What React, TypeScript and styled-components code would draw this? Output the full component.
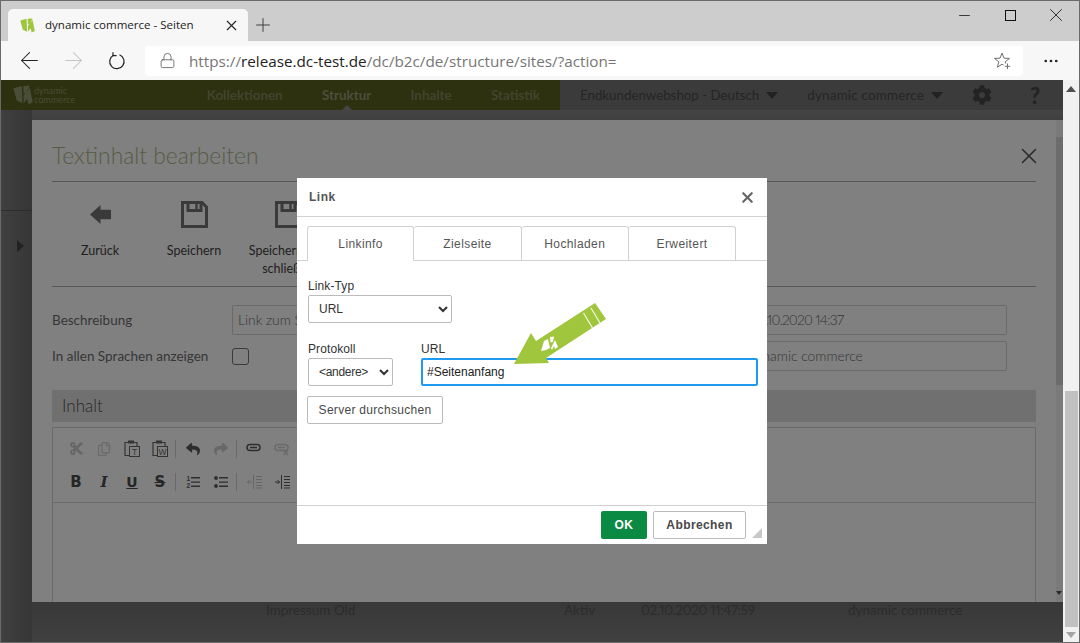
import styled, { createGlobalStyle } from 'styled-components'
import { ArrowLeft, ArrowRight, Ellipsis, Lock, Minus, Plus, X } from 'lucide-react'
import { FaCog, FaCut, FaRegCopy, FaReply, FaShare } from 'react-icons/fa'

const GlobalStyle = createGlobalStyle`
  html, body {
    margin: 0;
    padding: 0;
    background: #fff;
  }
  * {
    box-sizing: border-box;
  }
`

const Logo = ({ color, size }: { color: string; size: number }) => (
  <svg width={size} height={size} viewBox="0 0 16 16">
    <path d="M0.3 2.6 L7 0.8 L7.6 14.6 L3 12.4 Z" fill={color} />
    <path d="M8.2 0.9 L13.4 0.4 L10.6 6.4 L8.4 6.8 Z" fill={color} />
    <path d="M8.4 8.4 L13.4 2 L15.8 13.8 L12.4 15.4 L11.2 11 L8.6 14.6 Z" fill={color} />
  </svg>
)

const PasteIcon = ({ letter, color }: { letter: string; color: string }) => (
  <svg width="16" height="17" viewBox="0 0 16 17">
    <path d="M4 2.5 H1 V15.5 H5" fill="none" stroke={color} strokeWidth="1.2" />
    <path d="M10 2.5 H13 V6" fill="none" stroke={color} strokeWidth="1.2" />
    <rect x="4" y="0.5" width="6" height="3" fill={color} />
    <rect x="5.5" y="6.5" width="10" height="10" fill="none" stroke={color} strokeWidth="1" />
    <text x="10.5" y="14.6" fontSize="8.5" fontFamily="Liberation Sans, sans-serif" textAnchor="middle" fill={color}>
      {letter}
    </text>
  </svg>
)

const LinkIcon = ({ color, broken }: { color: string; broken?: boolean }) => (
  <svg width="16" height="14" viewBox="0 0 16 14">
    <rect x="1" y="2.5" width="13" height="6" rx="3" fill="none" stroke={color} strokeWidth="1.5" />
    <path d="M4 5.5 H11" stroke={color} strokeWidth="1.5" />
    {broken && <path d="M9.5 8.5 L14 13 M14 8.5 L9.5 13" stroke={color} strokeWidth="1.5" />}
  </svg>
)

const ListIcon = ({ ordered }: { ordered?: boolean }) => (
  <svg width="14" height="14" viewBox="0 0 14 14" fill="#2e2e2e">
    <path d="M5 2 H14 V3.4 H5 Z M5 6.4 H14 V7.8 H5 Z M5 10.6 H14 V12 H5 Z" />
    {ordered ? (
      <>
        <text x="0.5" y="6" fontSize="6.5" fontFamily="Liberation Sans, sans-serif" fontWeight="700">
          1
        </text>
        <text x="0.5" y="13" fontSize="6.5" fontFamily="Liberation Sans, sans-serif" fontWeight="700">
          2
        </text>
      </>
    ) : (
      <>
        <circle cx="2" cy="3" r="1.9" />
        <circle cx="2" cy="11" r="1.9" />
      </>
    )}
  </svg>
)

const IndentIcon = ({ color, out }: { color: string; out?: boolean }) => (
  <svg width="15" height="14" viewBox="0 0 15 14" fill="none" stroke={color} strokeWidth="1">
    <path d="M6.5 0 V14" />
    <path d="M9 1.5 H15 M9 4.5 H15 M9 7.5 H15 M9 10.5 H15 M9 13 H15" />
    {out ? <path d="M5 7 H0.5 M2.5 5 L0.5 7 L2.5 9" /> : <path d="M0 7 H4.5 M2.5 5 L4.5 7 L2.5 9" />}
  </svg>
)

const SaveIcon = () => (
  <svg width="27" height="27" viewBox="0 0 27 27" fill="none" stroke="#3a3a3a" strokeWidth="3">
    <path d="M1.5 1.5 H21 L25.5 6 V25.5 H1.5 Z" />
    <path d="M7 1.5 V9.5 H20 V1.5" />
    <path d="M15.5 3 V8" strokeWidth="2.4" />
  </svg>
)

const EditorTools = () => {
  const rows = [
    [
      [
        <FaCut key="cut" size={15} color="#666" />,
        <FaRegCopy key="copy" size={14} color="#6c6c6c" />,
        <PasteIcon key="text" letter="T" color="#343434" />,
        <PasteIcon key="word" letter="W" color="#343434" />,
      ],
      [<FaReply key="undo" size={14} color="#2e2e2e" />, <FaShare key="redo" size={14} color="#686868" />],
      [<LinkIcon key="link" color="#2e2e2e" />, <LinkIcon key="unlink" color="#6a6a6a" broken />],
    ],
    [
      [
        <BoldGlyph key="b">B</BoldGlyph>,
        <ItalicGlyph key="i">I</ItalicGlyph>,
        <UnderGlyph key="u">U</UnderGlyph>,
        <StrikeGlyph key="s">S</StrikeGlyph>,
      ],
      [<ListIcon key="ol" ordered />, <ListIcon key="ul" />],
      [<IndentIcon key="out" color="#666" out />, <IndentIcon key="in" color="#2e2e2e" />],
    ],
  ]
  return (
    <EditorToolbar>
      {rows.map((row, r) => (
        <ToolRow key={r}>
          {row.map((group, g) => (
            <ToolGroup key={g} $first={g === 0}>
              {group.map((icon, i) => (
                <ToolCell key={i}>{icon}</ToolCell>
              ))}
            </ToolGroup>
          ))}
        </ToolRow>
      ))}
    </EditorToolbar>
  )
}

const App = () => {
  return (
    <>
      <GlobalStyle />
      <Win>
        <TitleBar>
          <Tab>
            <Logo color="#9cc73c" size={15} />
            <TabTitle>dynamic commerce - Seiten</TabTitle>
            <X size={17} strokeWidth={1.6} color="#222" />
          </Tab>
          <NewTab>
            <Plus size={22} strokeWidth={1} color="#333" />
          </NewTab>
          <WinButtons>
            <WinButton>
              <Minus size={17} strokeWidth={1.1} color="#111" />
            </WinButton>
            <WinButton>
              <MaxBox />
            </WinButton>
            <WinButton>
              <X size={22} strokeWidth={0.9} color="#111" />
            </WinButton>
          </WinButtons>
        </TitleBar>

        <BrowserBar>
          <NavIcon>
            <ArrowLeft size={27} strokeWidth={0.9} color="#222" />
          </NavIcon>
          <NavIcon>
            <ArrowRight size={27} strokeWidth={0.9} color="#c4c4c4" />
          </NavIcon>
          <NavIcon>
            <svg width="18" height="18" viewBox="0 0 18 18" fill="none" stroke="#222" strokeWidth="1.2">
              <path d="M11.5 2.8 A7.2 7.2 0 1 1 5.4 3.2" />
              <path d="M5 0.3 V3.6 H8.6" />
            </svg>
          </NavIcon>
          <Address>
            <Lock size={17} strokeWidth={1.1} color="#555" />
            <Url>
              <UrlMuted>https://</UrlMuted>
              release.dc-test.de
              <UrlMuted>/dc/b2c/de/structure/sites/?action=</UrlMuted>
            </Url>
            <svg width="18" height="18" viewBox="0 0 18 18" fill="none" stroke="#707070" strokeWidth="1">
              <path d="M11.8 11.6 L11.2 9.8 L15.5 6.4 L10 6.2 L8 1 L6 6.2 L0.5 6.4 L4.8 9.8 L3.4 15.2 L8 12.2 L9.5 13" />
              <path d="M13.5 11.5 V17 M10.8 14.3 H16.2" />
            </svg>
          </Address>
          <MoreButton>
            <Ellipsis size={18} strokeWidth={1.6} color="#222" />
          </MoreButton>
        </BrowserBar>

        <Page>
          <PageMain>
            <TopNav>
              <Brand>
                <Logo color="#4a4d38" size={20} />
                <BrandText>
                  dynamic
                  <br />
                  commerce
                </BrandText>
                <Menu>
                  <MenuItem>Kollektionen</MenuItem>
                  <MenuItem $active>Struktur</MenuItem>
                  <MenuItem>Inhalte</MenuItem>
                  <MenuItem>Statistik</MenuItem>
                </Menu>
              </Brand>
              <UserMenu>
                <UserItem>
                  Endkundenwebshop - Deutsch
                  <Caret />
                </UserItem>
                <UserItem $wide>
                  dynamic commerce
                  <Caret />
                </UserItem>
                <FaCog size={20} color="#232323" />
                <Help>?</Help>
              </UserMenu>
            </TopNav>
            <PageBody>
              <Sidebar>
                <SidebarHead />
                <SidebarArrow />
              </Sidebar>
              <TableArea>
                <TableRow>
                  <span>Impressum Old</span>
                  <span>Aktiv</span>
                  <TableDate>02.10.2020 11:47:59</TableDate>
                  <span>dynamic commerce</span>
                </TableRow>
              </TableArea>
            </PageBody>

            <Modal>
              <ModalContent>
                <ModalHeader>
                  <ModalTitle>Textinhalt bearbeiten</ModalTitle>
                  <ModalClose>
                    <X size={26} strokeWidth={1.4} color="#2a2a2a" />
                  </ModalClose>
                </ModalHeader>
                <ActionBar>
                  <Action>
                    <ActionIcon>
                      <svg width="21" height="19" viewBox="0 0 20 18">
                        <path d="M0 9 L10 0 V4.5 H20 V13.5 H10 V18 Z" fill="#3a3a3a" />
                      </svg>
                    </ActionIcon>
                    Zurück
                  </Action>
                  <Action>
                    <ActionIcon>
                      <SaveIcon />
                    </ActionIcon>
                    Speichern
                  </Action>
                  <Action>
                    <ActionIcon>
                      <SaveIcon />
                    </ActionIcon>
                    Speichern und schließen
                  </Action>
                </ActionBar>
                <FormGrid>
                  <FieldLabel>Beschreibung</FieldLabel>
                  <FieldBox>Link zum Seitenanfang</FieldBox>
                  <span />
                  <FieldBox $date>02.10.2020 14:37</FieldBox>
                  <FieldLabel>In allen Sprachen anzeigen</FieldLabel>
                  <CheckBox />
                  <span />
                  <FieldBox>dynamic commerce</FieldBox>
                </FormGrid>
                <SectionBar>Inhalt</SectionBar>
                <Editor>
                  <EditorTools />
                </Editor>
              </ModalContent>
              <ModalScroll>
                <ModalThumb />
                <ModalScrollArrow />
              </ModalScroll>
            </Modal>

            <Dialog>
              <DialogTitle>
                Link
                <X size={17} strokeWidth={3} color="#666" />
              </DialogTitle>
              <Tabs>
                <DialogTab $active>Linkinfo</DialogTab>
                <DialogTab>Zielseite</DialogTab>
                <DialogTab>Hochladen</DialogTab>
                <DialogTab>Erweitert</DialogTab>
              </Tabs>
              <DialogBody>
                <DialogLabel>Link-Typ</DialogLabel>
                <TypeSelect defaultValue="URL">
                  <option>URL</option>
                </TypeSelect>
                <UrlRow>
                  <div>
                    <DialogLabel>Protokoll</DialogLabel>
                    <ProtocolSelect defaultValue="andere">
                      <option value="andere">&lt;andere&gt;</option>
                    </ProtocolSelect>
                  </div>
                  <UrlField>
                    <DialogLabel>URL</DialogLabel>
                    <UrlInput defaultValue="#Seitenanfang" />
                  </UrlField>
                </UrlRow>
                <ServerButton>Server durchsuchen</ServerButton>
              </DialogBody>
              <DialogFooter>
                <OkButton>OK</OkButton>
                <CancelButton>Abbrechen</CancelButton>
                <Grip />
              </DialogFooter>
            </Dialog>

            <Pointer viewBox="0 0 120 85" width="120" height="85">
              <path d="M14 69 L31 38 L36 46 L95 8 L106 24 L46 63 L49 68 Z" fill="#a0c63e" />
              <path d="M83.5 18 L92.5 33 M91 13 L100 28" stroke="#eef4da" strokeWidth="1.3" />
              <path d="M41 56 L44 46 L48 44 L50 53 L46 55 Z M50 42 L54 41.5 L53 47 L50.5 47.5 Z M51 53 L55 45 L58 52 L55 54 L54 51 L52 55 Z" fill="#fff" />
            </Pointer>
          </PageMain>

          <PageScroll>
            <ScrollArrow $up />
            <ScrollSpacer />
            <ScrollThumb />
            <ScrollArrow />
          </PageScroll>
        </Page>
      </Win>
    </>
  )
}

export default App

const Win = styled.div`
  width: 1080px;
  height: 643px;
  border: 1px solid #6a6a6a;
  display: flex;
  flex-direction: column;
  overflow: hidden;
  font-family: 'Liberation Sans', Arial, sans-serif;
`

const TitleBar = styled.div`
  height: 40px;
  background: #cdcdcd;
  display: flex;
  align-items: flex-end;
  padding-left: 7px;
  flex-shrink: 0;
`
const Tab = styled.div`
  width: 240px;
  height: 32px;
  background: #f7f7f7;
  border-radius: 5px 5px 0 0;
  display: flex;
  align-items: center;
  padding: 0 8px 0 12px;
`
const TabTitle = styled.span`
  flex: 1;
  margin-left: 10px;
  padding-bottom: 2px;
  font: 11.55px 'Open Sans', sans-serif;
  color: #222;
`
const NewTab = styled.div`
  width: 30px;
  height: 32px;
  display: flex;
  align-items: center;
  justify-content: center;
`
const WinButtons = styled.div`
  margin-left: auto;
  align-self: flex-start;
  display: flex;
  padding-top: 6px;
`
const WinButton = styled.div`
  width: 46px;
  height: 16px;
  display: flex;
  align-items: center;
  justify-content: center;
`
const MaxBox = styled.div`
  width: 11px;
  height: 11px;
  border: 1px solid #111;
`

const BrowserBar = styled.div`
  height: 39px;
  background: #f7f7f7;
  display: flex;
  align-items: center;
  padding-left: 6px;
  flex-shrink: 0;
`
const NavIcon = styled.div`
  width: 44px;
  height: 30px;
  display: flex;
  align-items: center;
  justify-content: center;
`
const Address = styled.div`
  width: 878px;
  height: 30px;
  margin-left: 6px;
  background: #fff;
  border-radius: 4px;
  display: flex;
  align-items: center;
  padding: 0 11px 0 14px;
`
const Url = styled.div`
  flex: 1;
  margin-left: 13px;
  font: 15.25px 'Open Sans', sans-serif;
  color: #222;
`
const UrlMuted = styled.span`
  color: #767676;
`
const MoreButton = styled.div`
  width: 56px;
  display: flex;
  justify-content: center;
`

const Page = styled.div`
  flex: 1;
  display: flex;
  min-height: 0;
`
const PageMain = styled.div`
  position: relative;
  flex: 1;
  display: flex;
  flex-direction: column;
  background: #3b3b3b;
  overflow: hidden;
  font-family: Lato, sans-serif;
  font-variant-numeric: proportional-nums;
`
const TopNav = styled.div`
  height: 30px;
  display: flex;
  flex-shrink: 0;
`
const Brand = styled.div`
  width: 559px;
  background: #2d3110;
  display: flex;
  align-items: center;
  padding: 0 20px 0 12px;
  flex-shrink: 0;
`
const BrandText = styled.div`
  margin-left: 1px;
  font-size: 9px;
  line-height: 9px;
  color: #4a4d35;
`
const Menu = styled.div`
  display: flex;
  gap: 39.3px;
  align-items: center;
  margin-left: auto;
  font-size: 13.4px;
  font-weight: 700;
`
const MenuItem = styled.span<{ $active?: boolean }>`
  position: relative;
  height: 30px;
  line-height: 30px;
  color: ${(p) => (p.$active ? '#4c4e3c' : '#42442f')};
  &::after {
    content: '';
    display: ${(p) => (p.$active ? 'block' : 'none')};
    position: absolute;
    left: 50%;
    bottom: 0;
    margin-left: -5px;
    border: 5px solid transparent;
    border-top: 0;
    border-bottom-color: #454545;
  }
`
const UserMenu = styled.div`
  flex: 1;
  display: flex;
  align-items: center;
  padding-left: 20px;
  font-size: 13.3px;
  color: #252525;
`
const UserItem = styled.div<{ $wide?: boolean }>`
  display: flex;
  align-items: center;
  margin-right: 29px;
  letter-spacing: ${(p) => (p.$wide ? '0.25px' : '0')};
`
const Caret = styled.span`
  margin-left: 7px;
  border: 6.5px solid transparent;
  border-bottom: 0;
  border-top: 7px solid #222;
`
const Help = styled.span`
  margin-left: 38px;
  font-size: 22px;
  font-weight: 900;
  color: #232323;
`

const PageBody = styled.div`
  flex: 1;
  display: flex;
  background: linear-gradient(180deg, #454545 0, #404040 10px, #383838 492px, #404040 100%);
  min-height: 0;
`
const Sidebar = styled.div`
  width: 31px;
  background: linear-gradient(90deg, #404040, #363636);
`
const SidebarHead = styled.div`
  height: 101px;
  border-bottom: 1px solid #2d2d2d;
`
const SidebarArrow = styled.div`
  margin: 29px 0 0 16px;
  width: 0;
  border: 6px solid transparent;
  border-right: 0;
  border-left: 7px solid #222;
`
const TableArea = styled.div`
  flex: 1;
  display: flex;
  flex-direction: column;
  justify-content: flex-end;
  padding-bottom: 24px;
`
const TableRow = styled.div`
  display: grid;
  grid-template-columns: 298px 77px 207px 1fr;
  padding-left: 234px;
  font-size: 13.5px;
  line-height: 16px;
  color: #2c2c2c;
`
const TableDate = styled.span`
  letter-spacing: -0.33px;
`

const Modal = styled.div`
  position: absolute;
  left: 31px;
  top: 40px;
  right: 0;
  height: 482px;
  background: #808080;
  display: flex;
  overflow: hidden;
`
const ModalContent = styled.div`
  flex: 1;
  min-width: 0;
  padding: 0 20px;
`
const ModalHeader = styled.div`
  height: 62px;
  border-bottom: 1px solid #585858;
  display: flex;
  align-items: center;
  justify-content: space-between;
  padding-top: 10px;
`
const ModalTitle = styled.div`
  font-size: 22.8px;
  font-weight: 300;
  color: #565c42;
  margin-top: -2px;
`
const ModalClose = styled.div`
  display: flex;
  margin-right: -6px;
`
const ActionBar = styled.div`
  height: 105px;
  border-bottom: 1px solid #585858;
  display: flex;
  padding: 18px 0 0 1px;
`
const Action = styled.div`
  width: 94px;
  text-align: center;
  font-size: 12.5px;
  line-height: 18px;
  color: #1e1e1e;
`
const ActionIcon = styled.div`
  height: 28px;
  margin-bottom: 14px;
  display: flex;
  align-items: center;
  justify-content: center;
`
const FormGrid = styled.div`
  display: grid;
  grid-template-columns: 180px 390px 120px 265px;
  grid-auto-rows: 30px;
  row-gap: 6px;
  padding-top: 18px;
  align-items: center;
`
const FieldLabel = styled.div`
  font-size: 13.5px;
  color: #363636;
`
const FieldBox = styled.div<{ $date?: boolean }>`
  height: 30px;
  line-height: 28px;
  border: 1px solid #6a6a6a;
  border-radius: 2px;
  padding-left: ${(p) => (p.$date ? '7px' : '5px')};
  font-size: 13.8px;
  font-weight: 300;
  letter-spacing: ${(p) => (p.$date ? '-0.75px' : '0')};
  color: #333;
  white-space: nowrap;
`
const CheckBox = styled.div`
  width: 17px;
  height: 17px;
  border: 1px solid #3a3a3a;
  border-radius: 3px;
`
const SectionBar = styled.div`
  margin-top: 19px;
  height: 32px;
  line-height: 32px;
  background: #707070;
  padding-left: 10px;
  font-size: 17px;
  font-weight: 300;
  color: #272727;
`
const Editor = styled.div`
  margin-top: 5px;
  height: 200px;
  border: 1px solid #6a6a6a;
`
const EditorToolbar = styled.div`
  height: 75px;
  border-bottom: 1px solid #6a6a6a;
  padding: 4px 0 0 9px;
`
const ToolRow = styled.div`
  height: 33px;
  display: flex;
  align-items: center;
`
const ToolGroup = styled.div<{ $first?: boolean }>`
  display: flex;
  align-items: center;
  height: 18px;
  margin-left: ${(p) => (p.$first ? '0' : '1px')};
  padding-left: ${(p) => (p.$first ? '0' : '3px')};
  border-left: ${(p) => (p.$first ? '0' : '1px solid #6a6a6a')};
`
const ToolCell = styled.div`
  width: 28px;
  height: 18px;
  display: flex;
  align-items: center;
  justify-content: center;
`
const BoldGlyph = styled.span`
  font: bold 15px 'DejaVu Sans', sans-serif;
  color: #262626;
`
const ItalicGlyph = styled.span`
  font: italic bold 15px 'DejaVu Serif', serif;
  color: #262626;
`
const UnderGlyph = styled.span`
  font: bold 14px 'DejaVu Sans', sans-serif;
  color: #262626;
  text-decoration: underline;
`
const StrikeGlyph = styled.span`
  font: bold 15px 'DejaVu Sans', sans-serif;
  color: #262626;
  text-decoration: line-through;
`
const ModalScroll = styled.div`
  width: 7px;
  padding-top: 17px;
  background: #7a7a7a;
  display: flex;
  flex-direction: column;
  justify-content: space-between;
`
const ModalThumb = styled.div`
  height: 248px;
  background: #6c6c6c;
`
const ModalScrollArrow = styled.div`
  margin: 0 0 7px 0;
  width: 0;
  border: 3px solid transparent;
  border-bottom: 0;
  border-top: 4px solid #2a2a2a;
`

const PageScroll = styled.div`
  width: 16px;
  background: #f1f1f1;
  display: flex;
  flex-direction: column;
  align-items: center;
`
const ScrollSpacer = styled.div`
  flex: 1;
`
const ScrollThumb = styled.div`
  width: 13px;
  height: 236px;
  background: #c1c1c1;
`
const ScrollArrow = styled.div<{ $up?: boolean }>`
  width: 0;
  height: 0;
  border-style: solid;
  border-width: ${(p) => (p.$up ? '0 5.5px 6px' : '6px 5.5px 0')};
  border-color: ${(p) => (p.$up ? 'transparent transparent #505050' : '#a3a3a3 transparent transparent')};
  margin: ${(p) => (p.$up ? '6px 0 0' : '5px 0 4px')};
`

const Dialog = styled.div`
  position: absolute;
  left: 296px;
  top: 98px;
  width: 470px;
  height: 366px;
  background: #fff;
  display: flex;
  flex-direction: column;
  font-family: 'Liberation Sans', Arial, sans-serif;
  color: #333;
`
const DialogTitle = styled.div`
  height: 39px;
  border-bottom: 1px solid #d1d1d1;
  display: flex;
  align-items: center;
  justify-content: space-between;
  padding: 0 11px 0 12px;
  font-size: 12px;
  font-weight: 700;
  letter-spacing: 0.5px;
  color: #555;
`
const Tabs = styled.div`
  height: 44px;
  padding: 9px 0 0 10px;
  border-bottom: 1px solid #d1d1d1;
  display: flex;
  flex-shrink: 0;
`
const DialogTab = styled.div<{ $active?: boolean }>`
  width: 107.3px;
  height: ${(p) => (p.$active ? '35px' : '34px')};
  border: 1px solid #d1d1d1;
  border-left-width: ${(p) => (p.$active ? '1px' : '0')};
  border-bottom: 0;
  border-radius: 3px 3px 0 0;
  background: #fff;
  text-align: center;
  line-height: 34px;
  font-size: 12px;
  letter-spacing: 0.4px;
  color: #555;
`
const DialogBody = styled.div`
  flex: 1;
  padding: 18px 10px 0 11px;
`
const DialogLabel = styled.div`
  font-size: 12px;
  line-height: 14px;
  letter-spacing: 0.1px;
  color: #333;
  margin-bottom: 2px;
`
const TypeSelect = styled.select`
  display: block;
  width: 144px;
  height: 28px;
  padding-left: 6px;
  background: #fff;
  border: 1px solid #bcbcbc;
  border-radius: 2px;
  font: 12px 'Liberation Sans', Arial, sans-serif;
  color: #333;
  outline: none;
`
const UrlRow = styled.div`
  display: flex;
  gap: 28px;
  margin-top: 19px;
`
const ProtocolSelect = styled(TypeSelect)`
  width: 85px;
  padding-left: 6px;
  letter-spacing: -0.3px;
`
const UrlField = styled.div`
  flex: 1;
`
const UrlInput = styled.input`
  display: block;
  width: 337px;
  height: 28px;
  padding: 0 4px;
  border: 2px solid #1e9af0;
  border-radius: 2px;
  font: 12px 'Liberation Sans', Arial, sans-serif;
  color: #222;
  outline: none;
`
const ServerButton = styled.div`
  margin: 10px 0 0 -1px;
  width: 136px;
  height: 28px;
  line-height: 26px;
  border: 1px solid #bcbcbc;
  border-radius: 2px;
  text-align: center;
  font-size: 12px;
  letter-spacing: 0.3px;
  color: #484848;
`
const DialogFooter = styled.div`
  height: 39px;
  border-top: 1px solid #d1d1d1;
  display: flex;
  align-items: flex-start;
  justify-content: flex-end;
  padding: 5px 5px 0 0;
  font-size: 12px;
  font-weight: 700;
  letter-spacing: 0.4px;
`
const OkButton = styled.div`
  width: 46px;
  height: 28px;
  line-height: 28px;
  background: #0b8a43;
  border-radius: 2px;
  text-align: center;
  color: #fff;
`
const CancelButton = styled.div`
  width: 93px;
  height: 28px;
  line-height: 26px;
  margin-left: 6px;
  border: 1px solid #bcbcbc;
  border-radius: 2px;
  text-align: center;
  color: #484848;
`
const Grip = styled.div`
  width: 0;
  height: 0;
  margin: 17px 0 0 6px;
  border-style: solid;
  border-width: 0 0 10px 10px;
  border-color: transparent transparent #c8c8c8 transparent;
`
const Pointer = styled.svg`
  position: absolute;
  left: 499px;
  top: 215px;
  z-index: 3;
`
